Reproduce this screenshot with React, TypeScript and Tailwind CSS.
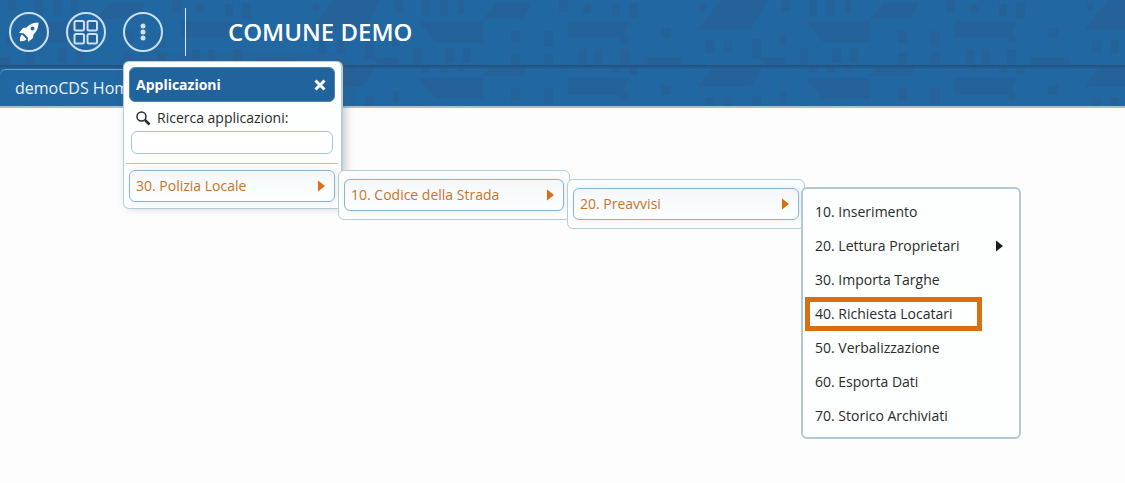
import { useState } from "react";
import type { ReactNode } from "react";

interface MenuEntry {
  code: string;
  label: string;
  hasChildren?: boolean;
  highlighted?: boolean;
}

const leafEntries: MenuEntry[] = [
  { code: "10", label: "Inserimento" },
  { code: "20", label: "Lettura Proprietari", hasChildren: true },
  { code: "30", label: "Importa Targhe" },
  { code: "40", label: "Richiesta Locatari", highlighted: true },
  { code: "50", label: "Verbalizzazione" },
  { code: "60", label: "Esporta Dati" },
  { code: "70", label: "Storico Archiviati" },
];

/* Skyline motif repeated along the header bars */
const Skyline = ({ id, shift }: { id: string; shift: number }) => (
  <svg className="absolute inset-0 h-full w-full" aria-hidden="true">
    <defs>
      <pattern
        id={id}
        width="387"
        height="114"
        x="113"
        y={shift}
        patternUnits="userSpaceOnUse">
        <g fill="#2a5f94" opacity="0.55">
          <path d="M0 3h32l-8 16H0zM387 3h-4l-14 16h18zM59 0h9v12h-9zM112 4h8v12h-8zM129 3h9v15h-9z" />
          <path d="M221 0h47l-12 22-6 8h-53l16-21z" />
          <path d="M68 21h62l-7 17H68zM305 21h65v21h-48z" />
          <path d="M11 31h9v12h-9zM44 31h9v16h-9zM11 53h9v12h-9zM44 53h9v12h-9zM79 49h8v15h-8zM95 49h7v15h-7zM120 49h9v15h-9z" />
          <path d="M161 28h10v10h-10zM144 57h38v8h-38zM205 40h9v13h-9zM224 40h8v13h-8zM252 39h9v19h-9zM258 57h27v8h-19zM280 34h6v12h-6zM300 48h8v17h-8z" />
          <path d="M332 48h9v15h-9zM350 48h8v15h-8zM282 0h8v11h-8zM309 0h8v16h-8zM327 0h8v16h-8zM345 0h6v14h-6z" />
          <circle cx="87" cy="9" r="5" />
          <circle cx="124" cy="38" r="5" />
          <circle cx="203" cy="7" r="4" />
        </g>
      </pattern>
    </defs>
    <rect width="100%" height="100%" fill={`url(#${id})`} />
  </svg>
);

const Arrow = ({ className }: { className: string }) => (
  <svg
    viewBox="0 0 7 12"
    className={`h-3 w-[7px] shrink-0 ${className}`}
    aria-hidden="true">
    <path d="M0 0.500L7 6L0 11.500z" fill="currentColor" />
  </svg>
);

const RoundButton = ({
  label,
  children,
}: {
  label: string;
  children: ReactNode;
}) => (
  <button
    type="button"
    aria-label={label}
    className="flex h-10 w-10 items-center justify-center rounded-full border-2 border-[#c9e0f5] text-[#c9e0f5]">
    {children}
  </button>
);

const Branch = ({ children }: { children: ReactNode }) => (
  <button
    type="button"
    className="flex h-8 w-full items-center justify-between rounded-md border border-[#8ab4d0] bg-linear-to-b from-[#f4f7f9] to-[#fdfeff] pr-[9px] pl-[6px] text-[#c87527] shadow-[2px_0_6px_rgba(60,90,110,0.12)]">
    <span>{children}</span>
    <Arrow className="text-[#d96f14]" />
  </button>
);

export default function App() {
  const [query, setQuery] = useState("");

  return (
    <div className="relative min-h-screen overflow-hidden bg-[#fdfdfd] font-['Open_Sans','Noto_Sans',sans-serif] text-sm leading-5 text-[#2b2b2b]">
      <header className="relative h-[65px] bg-[#2167a2]">
        <Skyline id="skyline-top" shift={0} />
        <div className="relative flex h-16 items-center pl-[9px]">
          <div className="flex gap-[17px]">
            <RoundButton label="Avvio rapido">
              <svg
                viewBox="0 0 24 24"
                className="h-6 w-6 shrink-0"
                aria-hidden="true">
                <path
                  fill="#fff"
                  fillRule="evenodd"
                  d="M21.500 2.500c-5 0-9 1.500-12 5L6 8 2 13l4.500.2 4.300 4.300.2 4.500L16 18l.5-3.500c3.500-3 5-7 5-12zM15.500 6.500a2 2 0 1 1 0 4 2 2 0 0 1 0-4z"
                />
                <path
                  fill="#fff"
                  d="M5 14.500l4.500 4.500c-1 1.700-3.300 2.400-6.500 2.200-.2-3 .3-5.500 2-6.700z"
                />
              </svg>
            </RoundButton>
            <RoundButton label="Moduli">
              <svg
                viewBox="0 0 26 26"
                className="h-[26px] w-[26px] shrink-0"
                fill="none"
                stroke="currentColor"
                strokeWidth="2"
                aria-hidden="true">
                <rect x="1.500" y="2" width="9.500" height="9.500" rx="1.500" />
                <rect x="14.500" y="2" width="9.500" height="9.500" rx="1.500" />
                <rect x="1.500" y="15" width="9.500" height="9.500" rx="1.500" />
                <rect x="14.500" y="15" width="9.500" height="9.500" rx="1.500" />
              </svg>
            </RoundButton>
            <RoundButton label="Applicazioni">
              <svg
                viewBox="0 0 6 20"
                className="h-5 w-[6px]"
                fill="currentColor"
                aria-hidden="true">
                <circle cx="3" cy="4" r="2.500" />
                <circle cx="3" cy="10" r="2.500" />
                <circle cx="3" cy="16" r="2.500" />
              </svg>
            </RoundButton>
          </div>
          <div className="ml-[22px] h-12 w-px bg-[#dfeaf4]" />
          <h1 className="ml-[42px] text-2xl leading-8 font-semibold text-white">
            COMUNE DEMO
          </h1>
        </div>
      </header>

      <nav className="relative h-[43px] border-b-2 border-[#a9bfd3] bg-[#2167a2]">
        <Skyline id="skyline-tabs" shift={-8} />
        <div className="absolute inset-x-0 top-0 h-1 bg-linear-to-b from-[#234f78] to-transparent" />
        <a
          href="#home"
          className="absolute top-1 left-0 flex h-9 w-36 items-center rounded-tl-md border-t border-[#6fa5d1] bg-[#2167a2] pl-[15px] text-base text-[#e9f3fb]">
          demoCDS Home
        </a>
      </nav>

      {/* Cascading menu, opened under the third header button */}
      <div className="absolute top-[61px] left-[123px] flex items-start">
        <section className="w-[220px] rounded-md border border-r-2 border-[#b4cddd] bg-[#fdfefe] p-[5px] pr-[6px] pb-[6px] shadow-[3px_-1px_8px_rgba(90,90,90,0.3)]">
          <div className="flex h-[35px] items-center justify-between rounded-md border border-[#4c86b5] bg-[#21639d] pr-2 pl-[6px] text-white">
            <h2 className="font-bold">Applicazioni</h2>
            <button type="button" aria-label="Chiudi">
              <svg
                viewBox="0 0 12 12"
                className="h-3 w-3"
                stroke="currentColor"
                strokeWidth="3"
                aria-hidden="true">
                <path d="M1.500 1.500L10.500 10.500M10.500 1.500L1.500 10.500" />
              </svg>
            </button>
          </div>
          <label
            htmlFor="app-search"
            className="mt-[6px] flex items-center gap-[6px] pl-[6px]">
            <svg
              viewBox="0 0 16 16"
              className="h-4 w-4"
              fill="none"
              stroke="currentColor"
              aria-hidden="true">
              <circle cx="6.500" cy="6.500" r="4.500" strokeWidth="1.500" />
              <path d="M10 10L14.500 14.500" strokeWidth="2.500" />
            </svg>
            Ricerca applicazioni:
          </label>
          <div className="px-[2px]">
            <input
              id="app-search"
              type="text"
              value={query}
              onChange={(e) => setQuery(e.target.value)}
              className="mt-[3px] block h-[23px] w-full rounded-md border border-[#a5c8dc] bg-white px-2 outline-none"
            />
          </div>
          <hr className="-mr-[3px] mt-[9px] mb-[6px] -ml-[3px] border-[#a5c8dc]" />
          <Branch>30. Polizia Locale</Branch>
        </section>

        <section className="mt-[109px] -ml-[5px] w-[232px] rounded-md border border-[#b4cddd] bg-[#fdfefe] p-[5px] pt-2 pb-2">
          <Branch>10. Codice della Strada</Branch>
        </section>

        <section className="mt-[118px] -ml-[3px] w-[238px] rounded-md border border-[#b4cddd] bg-[#fdfefe] p-[5px] pt-2 pb-2">
          <Branch>20. Preavvisi</Branch>
        </section>

        <ul className="mt-[126px] -ml-1 w-[220px] rounded-md border-2 border-[#b3c8d6] bg-[#fdfefe] px-[2px] pt-[6px] pb-1">
          {leafEntries.map((entry) => (
            <li key={entry.code}>
              <button
                type="button"
                className={`flex h-[34px] items-center justify-between pr-[14px] text-left ${
                  entry.highlighted
                    ? "w-[177px] border-[5px] border-[#d96f10] pl-[5px]"
                    : "w-full pl-[10px]"
                }`}>
                <span className="whitespace-nowrap">
                  {entry.code}. {entry.label}
                </span>
                {entry.hasChildren && <Arrow className="text-[#1c1c1c]" />}
              </button>
            </li>
          ))}
        </ul>
      </div>
    </div>
  );
}
